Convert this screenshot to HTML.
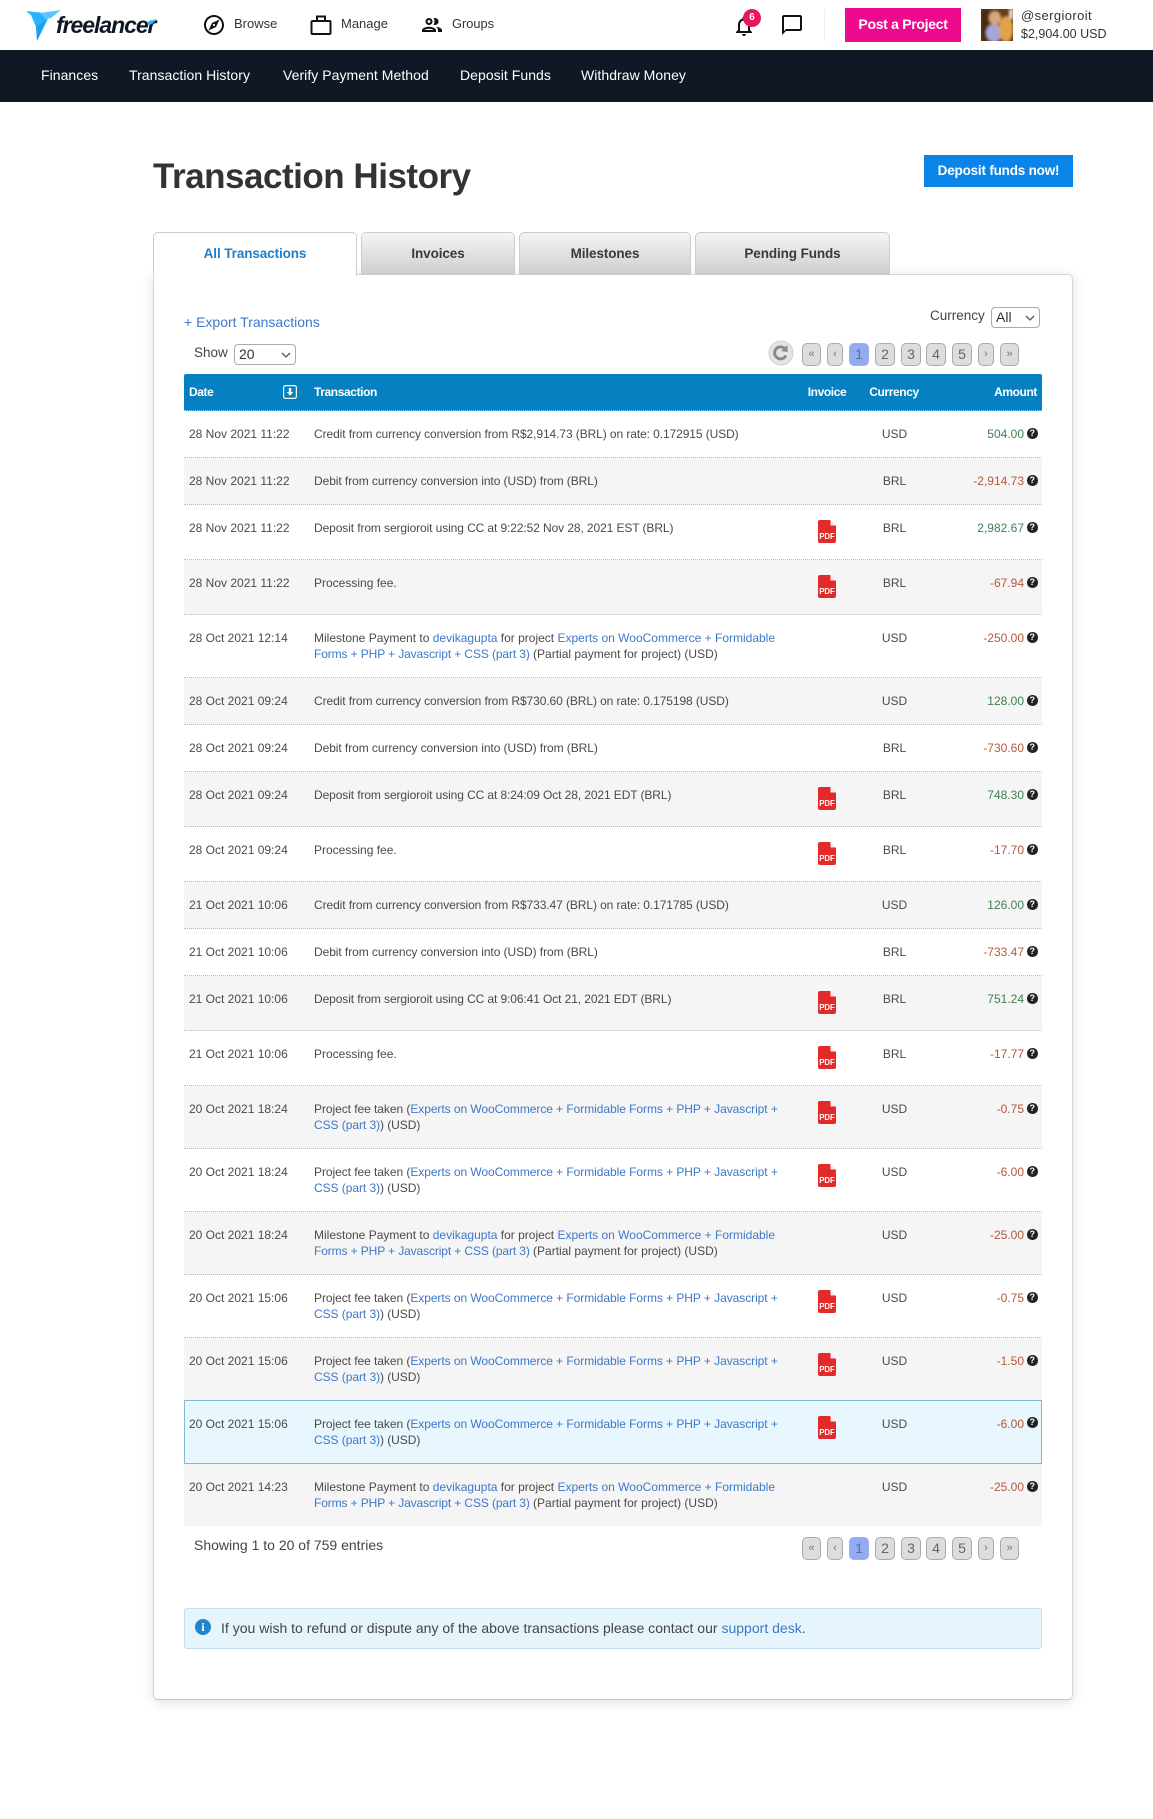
<!DOCTYPE html>
<html lang="en"><head><meta charset="utf-8"><title>Transaction History</title>
<style>
*{box-sizing:border-box}
html,body{margin:0;padding:0;background:#fff}
body{position:relative;width:1153px;height:1819px;overflow:hidden;font-family:"Liberation Sans",sans-serif;color:#444}
.a{position:absolute;white-space:nowrap}
a{color:#3d78c9;text-decoration:none}
.nav{color:#fff;font-size:14px;letter-spacing:.05px;line-height:18px;top:66px}
.top{color:#333;font-size:13px;line-height:16px;top:16px}
.tab{position:absolute;top:232px;height:43px;border:1px solid #ccc;border-bottom:0;border-radius:5px 5px 0 0;background:linear-gradient(#f5f5f5,#cdcdcd);font-weight:bold;font-size:13.5px;line-height:41px;text-align:center;color:#3a3a3a;letter-spacing:-.1px}
.pg{position:absolute;height:23px;border:1px solid #aaa;border-radius:5px;background:#ddd;color:#666;font-size:14px;line-height:21px;text-align:center}
.pg.s{font-size:11px;color:#777}
.pg.on{background:#92abf3;border-color:#9cb2ee;color:#5d6d96}
.sel{position:absolute;height:21px;border:1px solid #aaa;border-radius:4px;background:#fff;font-size:14px;line-height:19px;color:#333;padding-left:4px}
.sel svg{position:absolute;right:4px;top:7px}
.r{position:absolute;left:184px;width:858px;border-bottom:1px dotted #bbb;font-size:12px;line-height:16px;color:#4a4a4a}
.g{background:#f5f5f5}
.r>span{position:absolute;top:15px;white-space:nowrap}
.d{left:5px}
.t{left:130px}
.cr{letter-spacing:-.09px}
.db{letter-spacing:-.07px}
.dp{letter-spacing:-.1px}
.pf{letter-spacing:-.057px}
.mf{letter-spacing:-.115px}
.c{left:680.5px;width:60px;text-align:center}
.m{right:18px}
.p{color:#3f7f4f}
.n{color:#b5573c}
.r>span.q{left:843px;top:17px;width:10.5px;height:10.5px;border-radius:50%;background:#222;color:#fff;font-size:9px;line-height:10.5px;font-weight:bold;text-align:center}
.r>svg{position:absolute;left:634px;top:15px}
.h{position:absolute;top:374px;color:#fff;font-size:12px;font-weight:bold;line-height:16px;margin-top:10px;white-space:nowrap;letter-spacing:-.4px}
</style></head><body>

<!-- top bar -->
<svg class="a" style="left:24px;top:7px" width="40" height="36" viewBox="0 0 40 36">
<polygon points="2,4 20,6 21,12 13,13" fill="#29b2fe"/>
<polygon points="7,8 24,12 13,34 12,20" fill="#29b2fe"/>
<polygon points="12,20 22,13 13,34" fill="#1f9fe8"/>
<polygon points="16,6 37,3 27,11 22,12" fill="#5cc6fe"/>
</svg>
<div class="a" style="left:56px;top:12px;font:italic bold 23px/26px 'Liberation Sans',sans-serif;letter-spacing:-1.05px;color:#0e1724">freelancer</div>
<svg class="a" style="left:147px;top:19px" width="11" height="6"><polygon points="0,3 10,0 5,5 1,6" fill="#29b2fe"/></svg>

<svg class="a" style="left:202px;top:13px" width="24" height="24" viewBox="0 0 24 24"><path fill="#111" d="M12 2C6.48 2 2 6.48 2 12s4.48 10 10 10 10-4.48 10-10S17.52 2 12 2zm0 18c-4.41 0-8-3.59-8-8s3.59-8 8-8 8 3.59 8 8-3.59 8-8 8zm-5.5-2.5l7.51-3.49L17.5 6.5 9.99 9.99 6.5 17.5zm5.5-6.6c.61 0 1.1.49 1.1 1.1s-.49 1.1-1.1 1.1-1.1-.49-1.1-1.1.49-1.1 1.1-1.1z"/></svg>
<div class="a top" style="left:234px">Browse</div>
<svg class="a" style="left:310px;top:14px" width="22" height="22" viewBox="0 0 22 22"><path fill="none" stroke="#111" stroke-width="2" d="M2.500 7h17a1 1 0 0 1 1 1v11a1 1 0 0 1-1 1h-17a1 1 0 0 1-1-1V8a1 1 0 0 1 1-1zM7 7V2.500h8V7"/></svg>
<div class="a top" style="left:341px">Manage</div>
<svg class="a" style="left:420px;top:13px" width="24" height="24" viewBox="0 0 24 24"><path fill="#111" d="M9 13.750c-2.340 0-7 1.170-7 3.500V19h14v-1.750c0-2.330-4.660-3.500-7-3.500zM4.340 17c.84-.58 2.870-1.250 4.660-1.250s3.820.67 4.660 1.250H4.340zM9 12c1.930 0 3.500-1.570 3.500-3.500S10.930 5 9 5 5.500 6.570 5.500 8.500 7.070 12 9 12zm0-5c.83 0 1.500.67 1.500 1.500S9.830 10 9 10s-1.500-.67-1.500-1.500S8.170 7 9 7zm7.040 6.810c1.160.84 1.960 1.960 1.960 3.440V19h4v-1.750c0-2.020-3.500-3.170-5.960-3.440zM15 12c1.930 0 3.500-1.570 3.500-3.500S16.930 5 15 5c-.54 0-1.040.13-1.500.35.63.89 1 1.980 1 3.150s-.37 2.260-1 3.150c.46.22.96.35 1.500.35z"/></svg>
<div class="a top" style="left:452px;font-size:12.8px">Groups</div>

<svg class="a" style="left:732px;top:14px" width="24" height="24" viewBox="0 0 24 24"><path fill="#111" d="M12 22c1.100 0 2-.9 2-2h-4c0 1.100.9 2 2 2zm6-6v-5c0-3.070-1.630-5.640-4.500-6.320V4c0-.83-.67-1.500-1.500-1.500s-1.500.67-1.500 1.500v.68C7.640 5.360 6 7.920 6 11v5l-2 2v1h16v-1l-2-2zm-2 1H8v-6c0-2.480 1.510-4.500 4-4.500s4 2.020 4 4.500v6z"/></svg>
<div class="a" style="left:743px;top:9px;width:18px;height:18px;border-radius:50%;background:#e6165f;color:#fff;font-size:10px;font-weight:bold;line-height:18px;text-align:center">6</div>
<svg class="a" style="left:780px;top:13px" width="24" height="24" viewBox="0 0 24 24"><path fill="#111" d="M20 2H4c-1.100 0-2 .9-2 2v18l4-4h14c1.100 0 2-.9 2-2V4c0-1.100-.9-2-2-2zm0 14H6l-2 2V4h16v12z"/></svg>
<div class="a" style="left:824px;top:9px;width:1px;height:32px;background:#f0f0f0"></div>
<div class="a" style="left:845px;top:8px;width:116px;height:34px;background:#ee0a8c;color:#fff;font-size:14px;font-weight:bold;line-height:33px;text-align:center;letter-spacing:-.3px">Post a Project</div>
<svg class="a" style="left:981px;top:9px" width="32" height="32" viewBox="0 0 32 32"><defs><filter id="b"><feGaussianBlur stdDeviation="1.300"/></filter><clipPath id="cp"><rect width="32" height="32"/></clipPath></defs><rect width="32" height="32" fill="#6b3d16"/><g clip-path="url(#cp)" filter="url(#b)"><rect x="0" y="0" width="8" height="32" fill="#4a2a10"/><rect x="28" y="0" width="4" height="10" fill="#e9e2d6"/><ellipse cx="14" cy="9" rx="6" ry="7" fill="#d9a87e"/><ellipse cx="13" cy="24" rx="8" ry="9" fill="#a6a7d6"/><ellipse cx="25" cy="20" rx="7" ry="13" fill="#e2a349"/></g></svg>
<div class="a" style="left:1021px;top:7px;font-size:13px;line-height:18px;color:#333;letter-spacing:.4px">@sergioroit</div>
<div class="a" style="left:1021px;top:25px;font-size:12.5px;line-height:18px;color:#333">$2,904.00 USD</div>

<!-- dark nav -->
<div class="a" style="left:0;top:50px;width:1153px;height:52px;background:#0f1824"></div>
<div class="a nav" style="left:41px">Finances</div>
<div class="a nav" style="left:129px">Transaction History</div>
<div class="a nav" style="left:283px">Verify Payment Method</div>
<div class="a nav" style="left:460px">Deposit Funds</div>
<div class="a nav" style="left:581px">Withdraw Money</div>

<!-- title -->
<div class="a" style="left:153px;top:156px;font-size:35px;font-weight:bold;line-height:42px;color:#333;letter-spacing:-.48px">Transaction History</div>
<div class="a" style="left:924px;top:155px;width:149px;height:32px;background:#0a84e8;color:#fff;font-size:13.5px;font-weight:bold;line-height:31px;text-align:center;letter-spacing:-.2px">Deposit funds now!</div>

<!-- card -->
<div class="a" style="left:153px;top:274px;width:920px;height:1426px;background:#fff;border:1px solid #d6d6d6;border-bottom-color:#c4c4c4;border-radius:5px;box-shadow:0 2px 12px rgba(0,0,0,.13)"></div>
<div class="tab" style="left:153px;width:204px;height:44px;background:#fff;color:#1f7fc4;z-index:2">All Transactions</div>
<div class="tab" style="left:361px;width:154px">Invoices</div>
<div class="tab" style="left:519px;width:172px">Milestones</div>
<div class="tab" style="left:695px;width:195px">Pending Funds</div>

<div class="a" style="left:184px;top:313px;font-size:14px;line-height:18px;color:#3d78c9">+ Export Transactions</div>
<div class="a" style="left:930px;top:307px;font-size:13.5px;line-height:18px;color:#444">Currency</div>
<div class="sel" style="left:991px;top:307px;width:49px">All<svg width="10" height="6"><path d="M1 1l4 4 4-4" fill="none" stroke="#555" stroke-width="1.300"/></svg></div>
<div class="a" style="left:194px;top:344px;font-size:13.5px;line-height:18px;color:#444">Show</div>
<div class="sel" style="left:234px;top:344px;width:62px">20<svg width="10" height="6"><path d="M1 1l4 4 4-4" fill="none" stroke="#555" stroke-width="1.300"/></svg></div>

<svg class="a" style="left:768px;top:340px" width="26" height="26" viewBox="0 0 26 26"><circle cx="13" cy="13" r="12" fill="#e4e4e4" stroke="#d0d0d0"/><path d="M18 15.500a6 6 0 1 1-.8-6.500" fill="none" stroke="#8a8a8a" stroke-width="3"/><polygon points="19.500,5 19.500,12 13,11" fill="#8a8a8a"/></svg>
<div class="pg s" style="top:343px;left:802px;width:19px">«</div>
<div class="pg s" style="top:343px;left:827px;width:16px">‹</div>
<div class="pg on" style="top:343px;left:849px;width:20px">1</div>
<div class="pg" style="top:343px;left:875px;width:20px">2</div>
<div class="pg" style="top:343px;left:901px;width:20px">3</div>
<div class="pg" style="top:343px;left:926px;width:20px">4</div>
<div class="pg" style="top:343px;left:952px;width:20px">5</div>
<div class="pg s" style="top:343px;left:978px;width:16px">›</div>
<div class="pg s" style="top:343px;left:1000px;width:19px">»</div>

<!-- table head -->
<div class="a" style="left:184px;top:374px;width:858px;height:37px;background:#0581c2;border-bottom:1px dotted #9ccbe4;border-radius:2px 2px 0 0"></div>
<div class="h" style="left:189px">Date</div>
<svg class="a" style="left:283px;top:385px" width="14" height="14" viewBox="0 0 14 14"><rect x=".6" y=".6" width="12.800" height="12.800" rx="2" fill="none" stroke="#fff" stroke-width="1.200"/><path d="M5.800 3h2.400v4h2L7 10.800 3.800 7h2z" fill="#fff"/></svg>
<div class="h" style="left:314px">Transaction</div>
<div class="h" style="left:807px;width:40px;text-align:center">Invoice</div>
<div class="h" style="left:864px;width:60px;text-align:center">Currency</div>
<div class="h" style="right:116px">Amount</div>

<!-- rows -->
<div class="r" style="top:411px;height:47px"><span class="d">28 Nov 2021 11:22</span><span class="t cr">Credit from currency conversion from R$2,914.73 (BRL) on rate: 0.172915 (USD)</span><span class="c">USD</span><span class="m p">504.00</span><span class="q">?</span></div>
<div class="r g" style="top:458px;height:47px"><span class="d">28 Nov 2021 11:22</span><span class="t db">Debit from currency conversion into (USD) from (BRL)</span><span class="c">BRL</span><span class="m n">-2,914.73</span><span class="q">?</span></div>
<div class="r" style="top:505px;height:55px"><span class="d">28 Nov 2021 11:22</span><span class="t dp">Deposit from sergioroit using CC at 9:22:52 Nov 28, 2021 EST (BRL)</span><svg width="18" height="23" viewBox="0 0 18 23"><path d="M2 0h10l6 6v15a2 2 0 0 1-2 2H2a2 2 0 0 1-2-2V2a2 2 0 0 1 2-2z" fill="#e22a2a"/><path d="M12.500 0l5.500 5.500h-5.500z" fill="#fde8e8"/><text x="9" y="19" font-size="7.800" font-weight="bold" fill="#fff" text-anchor="middle">PDF</text></svg><span class="c">BRL</span><span class="m p">2,982.67</span><span class="q">?</span></div>
<div class="r g" style="top:560px;height:55px"><span class="d">28 Nov 2021 11:22</span><span class="t">Processing fee.</span><svg width="18" height="23" viewBox="0 0 18 23"><path d="M2 0h10l6 6v15a2 2 0 0 1-2 2H2a2 2 0 0 1-2-2V2a2 2 0 0 1 2-2z" fill="#e22a2a"/><path d="M12.500 0l5.500 5.500h-5.500z" fill="#fde8e8"/><text x="9" y="19" font-size="7.800" font-weight="bold" fill="#fff" text-anchor="middle">PDF</text></svg><span class="c">BRL</span><span class="m n">-67.94</span><span class="q">?</span></div>
<div class="r" style="top:615px;height:63px"><span class="d">28 Oct 2021 12:14</span><span class="t">Milestone Payment to <a>devikagupta</a> for project <a>Experts on WooCommerce + Formidable<br><span class="mf">Forms + PHP + Javascript + CSS (part 3)</span></a> (Partial payment for project) (USD)</span><span class="c">USD</span><span class="m n">-250.00</span><span class="q">?</span></div>
<div class="r g" style="top:678px;height:47px"><span class="d">28 Oct 2021 09:24</span><span class="t cr">Credit from currency conversion from R$730.60 (BRL) on rate: 0.175198 (USD)</span><span class="c">USD</span><span class="m p">128.00</span><span class="q">?</span></div>
<div class="r" style="top:725px;height:47px"><span class="d">28 Oct 2021 09:24</span><span class="t db">Debit from currency conversion into (USD) from (BRL)</span><span class="c">BRL</span><span class="m n">-730.60</span><span class="q">?</span></div>
<div class="r g" style="top:772px;height:55px"><span class="d">28 Oct 2021 09:24</span><span class="t dp">Deposit from sergioroit using CC at 8:24:09 Oct 28, 2021 EDT (BRL)</span><svg width="18" height="23" viewBox="0 0 18 23"><path d="M2 0h10l6 6v15a2 2 0 0 1-2 2H2a2 2 0 0 1-2-2V2a2 2 0 0 1 2-2z" fill="#e22a2a"/><path d="M12.500 0l5.500 5.500h-5.500z" fill="#fde8e8"/><text x="9" y="19" font-size="7.800" font-weight="bold" fill="#fff" text-anchor="middle">PDF</text></svg><span class="c">BRL</span><span class="m p">748.30</span><span class="q">?</span></div>
<div class="r" style="top:827px;height:55px"><span class="d">28 Oct 2021 09:24</span><span class="t">Processing fee.</span><svg width="18" height="23" viewBox="0 0 18 23"><path d="M2 0h10l6 6v15a2 2 0 0 1-2 2H2a2 2 0 0 1-2-2V2a2 2 0 0 1 2-2z" fill="#e22a2a"/><path d="M12.500 0l5.500 5.500h-5.500z" fill="#fde8e8"/><text x="9" y="19" font-size="7.800" font-weight="bold" fill="#fff" text-anchor="middle">PDF</text></svg><span class="c">BRL</span><span class="m n">-17.70</span><span class="q">?</span></div>
<div class="r g" style="top:882px;height:47px"><span class="d">21 Oct 2021 10:06</span><span class="t cr">Credit from currency conversion from R$733.47 (BRL) on rate: 0.171785 (USD)</span><span class="c">USD</span><span class="m p">126.00</span><span class="q">?</span></div>
<div class="r" style="top:929px;height:47px"><span class="d">21 Oct 2021 10:06</span><span class="t db">Debit from currency conversion into (USD) from (BRL)</span><span class="c">BRL</span><span class="m n">-733.47</span><span class="q">?</span></div>
<div class="r g" style="top:976px;height:55px"><span class="d">21 Oct 2021 10:06</span><span class="t dp">Deposit from sergioroit using CC at 9:06:41 Oct 21, 2021 EDT (BRL)</span><svg width="18" height="23" viewBox="0 0 18 23"><path d="M2 0h10l6 6v15a2 2 0 0 1-2 2H2a2 2 0 0 1-2-2V2a2 2 0 0 1 2-2z" fill="#e22a2a"/><path d="M12.500 0l5.500 5.500h-5.500z" fill="#fde8e8"/><text x="9" y="19" font-size="7.800" font-weight="bold" fill="#fff" text-anchor="middle">PDF</text></svg><span class="c">BRL</span><span class="m p">751.24</span><span class="q">?</span></div>
<div class="r" style="top:1031px;height:55px"><span class="d">21 Oct 2021 10:06</span><span class="t">Processing fee.</span><svg width="18" height="23" viewBox="0 0 18 23"><path d="M2 0h10l6 6v15a2 2 0 0 1-2 2H2a2 2 0 0 1-2-2V2a2 2 0 0 1 2-2z" fill="#e22a2a"/><path d="M12.500 0l5.500 5.500h-5.500z" fill="#fde8e8"/><text x="9" y="19" font-size="7.800" font-weight="bold" fill="#fff" text-anchor="middle">PDF</text></svg><span class="c">BRL</span><span class="m n">-17.77</span><span class="q">?</span></div>
<div class="r g" style="top:1086px;height:63px"><span class="d">20 Oct 2021 18:24</span><span class="t pf">Project fee taken (<a>Experts on WooCommerce + Formidable Forms + PHP + Javascript +<br>CSS (part 3)</a>) (USD)</span><svg width="18" height="23" viewBox="0 0 18 23"><path d="M2 0h10l6 6v15a2 2 0 0 1-2 2H2a2 2 0 0 1-2-2V2a2 2 0 0 1 2-2z" fill="#e22a2a"/><path d="M12.500 0l5.500 5.500h-5.500z" fill="#fde8e8"/><text x="9" y="19" font-size="7.800" font-weight="bold" fill="#fff" text-anchor="middle">PDF</text></svg><span class="c">USD</span><span class="m n">-0.75</span><span class="q">?</span></div>
<div class="r" style="top:1149px;height:63px"><span class="d">20 Oct 2021 18:24</span><span class="t pf">Project fee taken (<a>Experts on WooCommerce + Formidable Forms + PHP + Javascript +<br>CSS (part 3)</a>) (USD)</span><svg width="18" height="23" viewBox="0 0 18 23"><path d="M2 0h10l6 6v15a2 2 0 0 1-2 2H2a2 2 0 0 1-2-2V2a2 2 0 0 1 2-2z" fill="#e22a2a"/><path d="M12.500 0l5.500 5.500h-5.500z" fill="#fde8e8"/><text x="9" y="19" font-size="7.800" font-weight="bold" fill="#fff" text-anchor="middle">PDF</text></svg><span class="c">USD</span><span class="m n">-6.00</span><span class="q">?</span></div>
<div class="r g" style="top:1212px;height:63px"><span class="d">20 Oct 2021 18:24</span><span class="t">Milestone Payment to <a>devikagupta</a> for project <a>Experts on WooCommerce + Formidable<br><span class="mf">Forms + PHP + Javascript + CSS (part 3)</span></a> (Partial payment for project) (USD)</span><span class="c">USD</span><span class="m n">-25.00</span><span class="q">?</span></div>
<div class="r" style="top:1275px;height:63px"><span class="d">20 Oct 2021 15:06</span><span class="t pf">Project fee taken (<a>Experts on WooCommerce + Formidable Forms + PHP + Javascript +<br>CSS (part 3)</a>) (USD)</span><svg width="18" height="23" viewBox="0 0 18 23"><path d="M2 0h10l6 6v15a2 2 0 0 1-2 2H2a2 2 0 0 1-2-2V2a2 2 0 0 1 2-2z" fill="#e22a2a"/><path d="M12.500 0l5.500 5.500h-5.500z" fill="#fde8e8"/><text x="9" y="19" font-size="7.800" font-weight="bold" fill="#fff" text-anchor="middle">PDF</text></svg><span class="c">USD</span><span class="m n">-0.75</span><span class="q">?</span></div>
<div class="r g" style="top:1338px;height:63px"><span class="d">20 Oct 2021 15:06</span><span class="t pf">Project fee taken (<a>Experts on WooCommerce + Formidable Forms + PHP + Javascript +<br>CSS (part 3)</a>) (USD)</span><svg width="18" height="23" viewBox="0 0 18 23"><path d="M2 0h10l6 6v15a2 2 0 0 1-2 2H2a2 2 0 0 1-2-2V2a2 2 0 0 1 2-2z" fill="#e22a2a"/><path d="M12.500 0l5.500 5.500h-5.500z" fill="#fde8e8"/><text x="9" y="19" font-size="7.800" font-weight="bold" fill="#fff" text-anchor="middle">PDF</text></svg><span class="c">USD</span><span class="m n">-1.50</span><span class="q">?</span></div>
<div class="r" style="top:1400px;height:64px;background:#e8f6fe;border:1px solid #7fb9d5"><span class="d" style="left:4px;top:15px">20 Oct 2021 15:06</span><span class="t pf" style="left:129px;top:15px">Project fee taken (<a>Experts on WooCommerce + Formidable Forms + PHP + Javascript +<br>CSS (part 3)</a>) (USD)</span><svg width="18" height="23" viewBox="0 0 18 23" style="left:633px;top:15px"><path d="M2 0h10l6 6v15a2 2 0 0 1-2 2H2a2 2 0 0 1-2-2V2a2 2 0 0 1 2-2z" fill="#e22a2a"/><path d="M12.500 0l5.500 5.500h-5.500z" fill="#fde8e8"/><text x="9" y="19" font-size="7.800" font-weight="bold" fill="#fff" text-anchor="middle">PDF</text></svg><span class="c" style="left:679.5px;top:15px">USD</span><span class="m n" style="right:17px;top:15px">-6.00</span><span class="q" style="left:842px;top:16px">?</span></div>
<div class="r g" style="top:1464px;height:62px;border-bottom:0"><span class="d">20 Oct 2021 14:23</span><span class="t">Milestone Payment to <a>devikagupta</a> for project <a>Experts on WooCommerce + Formidable<br><span class="mf">Forms + PHP + Javascript + CSS (part 3)</span></a> (Partial payment for project) (USD)</span><span class="c">USD</span><span class="m n">-25.00</span><span class="q">?</span></div>

<div class="a" style="left:194px;top:1536px;font-size:14px;line-height:18px;color:#444">Showing 1 to 20 of 759 entries</div>
<div class="pg s" style="top:1537px;left:802px;width:19px">«</div>
<div class="pg s" style="top:1537px;left:827px;width:16px">‹</div>
<div class="pg on" style="top:1537px;left:849px;width:20px">1</div>
<div class="pg" style="top:1537px;left:875px;width:20px">2</div>
<div class="pg" style="top:1537px;left:901px;width:20px">3</div>
<div class="pg" style="top:1537px;left:926px;width:20px">4</div>
<div class="pg" style="top:1537px;left:952px;width:20px">5</div>
<div class="pg s" style="top:1537px;left:978px;width:16px">›</div>
<div class="pg s" style="top:1537px;left:1000px;width:19px">»</div>

<div class="a" style="left:184px;top:1608px;width:858px;height:41px;background:#e6f4fc;border:1px solid #c5dfee;border-radius:3px"></div>
<div class="a" style="left:195px;top:1619px;width:16px;height:16px;border-radius:50%;background:#1f87c9;color:#fff;font:bold 12px/16px 'Liberation Serif',serif;text-align:center">i</div>
<div class="a" style="left:221px;top:1619px;font-size:14px;letter-spacing:.01px;line-height:18px;color:#444">If you wish to refund or dispute any of the above transactions please contact our <a>support desk</a>.</div>

</body></html>
